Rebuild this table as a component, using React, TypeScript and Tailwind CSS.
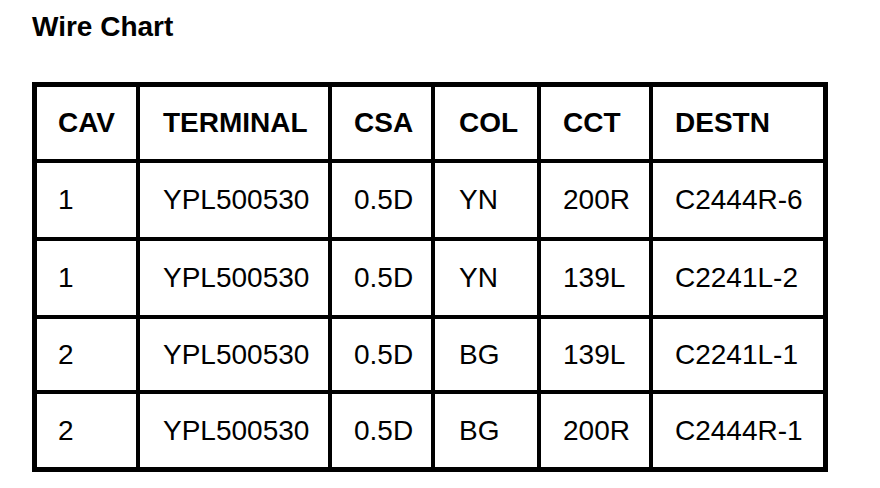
import React from 'react';

const HEADERS = ['CAV', 'TERMINAL', 'CSA', 'COL', 'CCT', 'DESTN'];

const ROWS = [
  ['1', 'YPL500530', '0.5D', 'YN', '200R', 'C2444R-6'],
  ['1', 'YPL500530', '0.5D', 'YN', '139L', 'C2241L-2'],
  ['2', 'YPL500530', '0.5D', 'BG', '139L', 'C2241L-1'],
  ['2', 'YPL500530', '0.5D', 'BG', '200R', 'C2444R-1'],
];

// column widths include the 4px divider on the left
const WIDTHS = ['w-[99px] pl-[21px]', 'w-[192px] pl-[23px]', 'w-[103px] pl-[22px]', 'w-[106px] pl-[24px]', 'w-[112px] pl-[22px]', 'w-[174px] pl-[22px]'];
const HEIGHTS = ['h-[72px]', 'h-[78px]', 'h-[78px]', 'h-[75px]', 'h-[77px]'];

const App: React.FC = () => {
  return (
    <div className="w-[880px] h-[488px] bg-white text-black font-['Liberation_Sans',Arial,sans-serif]">
      <h1 className="pl-[32px] pt-[11px] text-[28px] font-bold leading-[32px] h-[82px]">Wire Chart</h1>
      <div className="ml-[32px] w-[796px] border-[5px] border-black text-[28px]">
        {[HEADERS, ...ROWS].map((row, r) => (
          <div key={r} className={`flex ${HEIGHTS[r]} ${r > 0 ? 'border-t-4 border-black' : ''}`}>
            {row.map((cell, c) => (
              <div
                key={c}
                className={`${WIDTHS[c]} ${c > 0 ? 'border-l-4 border-black' : ''} flex items-center ${
                  r === 0 ? 'font-bold' : ''
                }`}
              >
                {cell}
              </div>
            ))}
          </div>
        ))}
      </div>
    </div>
  );
};

export default App;
